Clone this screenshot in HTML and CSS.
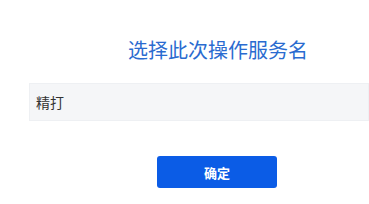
FILE: index.html
```html
<!DOCTYPE html>
<html lang="zh-CN">
<head>
    <meta charset="UTF-8">
    <meta name="viewport" content="width=device-width, initial-scale=1.0">
    <title>选择服务名</title>
    <link rel="stylesheet" href="styles.css">
</head>
<body>
    <div class="panel">
        <h2 class="panel-title">选择此次操作服务名</h2>
        <input type="text" class="service-input" value="精打">
        <div class="actions">
            <button class="btn-primary">确定</button>
        </div>
    </div>
</body>
</html>
```

FILE: styles.css
```css
body {
    margin: 0;
    padding: 0;
    background: #fff;
    font-family: "Noto Sans CJK SC", "Noto Sans", sans-serif;
}

.panel {
    width: 340px;
    margin-left: 29px;
    padding-top: 40px;
}

.panel-title {
    margin: 0;
    padding-left: 38px;
    font-size: 20px;
    line-height: 20px;
    font-weight: normal;
    color: #2a6bd0;
    text-align: center;
}

.service-input {
    display: block;
    box-sizing: border-box;
    width: 100%;
    height: 38px;
    margin-top: 23px;
    padding: 0 6px;
    border: 1px solid #eef0f3;
    background: #f5f6f8;
    color: #333;
    font-family: inherit;
    font-size: 14px;
    outline: none;
}

.actions {
    display: flex;
    justify-content: center;
    padding-left: 36px;
    margin-top: 35px;
}

.btn-primary {
    width: 120px;
    height: 32px;
    border: none;
    border-radius: 3px;
    background: #0b5ce6;
    color: #fff;
    font-family: inherit;
    font-size: 13px;
    font-weight: bold;
    cursor: pointer;
}
```
